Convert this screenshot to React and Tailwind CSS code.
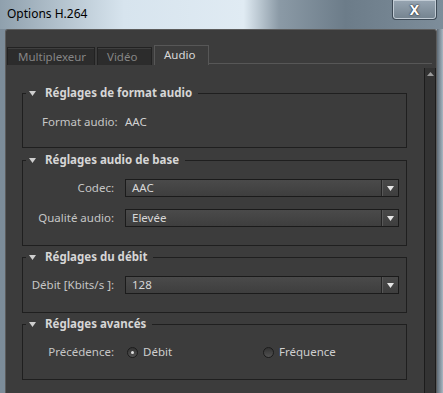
function Caret({ className }) {
  return (
    <svg width="7" height="5" viewBox="0 0 7 5" className={className}>
      <path d="M0 0h7L3.5 5z" fill="currentColor" />
    </svg>
  );
}

function Group({ title, className, children }) {
  return (
    <fieldset className={`border border-[#1f1f1f] ${className}`}>
      <legend className="ml-[3px] px-[3px] leading-[16px]">
        <span className="flex items-center h-[16px] text-[11.5px] font-bold text-[#d6d6d6]">
          <Caret className="text-[#cfcfcf] mr-[9px]" />
          <span className="pr-[3px]">{title}</span>
        </span>
      </legend>
      {children}
    </fieldset>
  );
}

function Select({ value }) {
  return (
    <div className="flex h-[18px] w-[274px] border border-[#1b1b1b] bg-gradient-to-b from-[#4a4a4a] to-[#3e3e3e]">
      <div className="flex-1 pl-[6px] leading-[16px] text-[#d8d8d8]">{value}</div>
      <div className="w-[17px] border-l border-[#252525] shadow-[inset_1px_0_0_#585858] flex items-center justify-center">
        <Caret className="text-[#e6e6e6]" />
      </div>
    </div>
  );
}

function Row({ label, children }) {
  return (
    <div className="flex items-center">
      <div className="w-[92px] text-right pr-[1px] text-[#c6c6c6]">{label}</div>
      <div className="ml-[10px]">{children}</div>
    </div>
  );
}

function Radio({ checked, label }) {
  return (
    <div className="flex items-center gap-[5px]">
      <span className="w-[11px] h-[11px] rounded-full border border-[#1c1c1c] bg-gradient-to-b from-[#333] to-[#525252] flex items-center justify-center">
        {checked && <span className="w-[3px] h-[3px] rounded-full bg-[#e0e0e0]" />}
      </span>
      <span className="text-[#cfcfcf]">{label}</span>
    </div>
  );
}

export default function App() {
  return (
    <div className="w-[443px] h-[393px] overflow-hidden flex flex-col bg-gradient-to-r from-[#7c8c99] via-[#8b9aa6] to-[#a7b5c0] font-['Noto_Sans',sans-serif] text-[11.5px]">
      {/* title bar */}
      <div className="h-[29px] shrink-0 flex items-start bg-[linear-gradient(90deg,#8fa0ad_0%,#b4c3ce_14%,#d7e4ee_28%,#e0ebf3_55%,#8b9aa6_63%,#6c7c89_78%,#7d8d9a_100%)]">
        <span className="pl-[7px] pt-[6px] text-[12px] leading-[16px] text-black">Options H.264</span>
        <div className="ml-auto mr-[6px] w-[45px] h-[20px] rounded-b-[4px] border border-t-0 border-[#3d4a56] shadow-[inset_0_0_0_1px_#c2ccd5] bg-gradient-to-b from-[#97a5b2] to-[#74838f] flex items-center justify-center">
          <span className="text-[14px] font-bold leading-none text-white [text-shadow:0_0_2px_#1d2630,0_0_1px_#1d2630]">X</span>
        </div>
      </div>

      <div className="flex-1 flex min-h-0">
        <div className="w-[5px] shrink-0" />
        {/* client area */}
        <div className="flex-1 flex flex-col min-h-0 bg-[#3c3c3c] border border-b-0 border-[#5c5c5c] rounded-t-[3px]">
          <div className="h-[35px] shrink-0 flex items-end pl-[1px]">
            <div className="h-[18px] w-[88px] bg-[#2c2c2c] border border-b-0 border-[#222] shadow-[inset_0_1px_0_#3f3f3f] text-[#858585] pl-[10px] leading-[17px]">
              Multiplexeur
            </div>
            <div className="ml-[2px] h-[18px] w-[55px] bg-[#2c2c2c] border border-b-0 border-[#222] shadow-[inset_0_1px_0_#3f3f3f] text-[#858585] pl-[9px] leading-[17px]">
              Vidéo
            </div>
            <div className="ml-[2px] h-[20px] w-[55px] bg-[#3c3c3c] border border-b-0 border-[#575757] text-[#d8d8d8] pl-[9px] leading-[18px]">
              Audio
            </div>
            <div className="flex-1 h-[1px] mb-[1px] mr-[4px] bg-[#575757]" />
          </div>

          <div className="flex-1 flex min-h-0">
            <div className="flex-1 pl-[16px] pr-[17px] pt-[20px] flex flex-col">
              <Group title="Réglages de format audio" className="h-[63px]">
                <div className="pt-[13px] flex items-center leading-[16px]">
                  <span className="pl-[19px] w-[102px] text-[#c6c6c6]">Format audio:</span>
                  <span className="text-[#d2d2d2]">AAC</span>
                </div>
              </Group>

              <Group title="Réglages audio de base" className="h-[94px] mt-[4px]">
                <div className="pt-[11px] flex flex-col gap-[12px] leading-[16px]">
                  <Row label="Codec:">
                    <Select value="AAC" />
                  </Row>
                  <Row label="Qualité audio:">
                    <Select value="Elevée" />
                  </Row>
                </div>
              </Group>

              <Group title="Réglages du débit" className="h-[64px] mt-[3px]">
                <div className="pt-[11px] leading-[16px]">
                  <Row label="Débit [Kbits/s ]:">
                    <Select value="128" />
                  </Row>
                </div>
              </Group>

              <Group title="Réglages avancés" className="h-[64px] mt-[3px]">
                <div className="pt-[12px] leading-[16px]">
                  <Row label="Précédence:">
                    <div className="flex items-center">
                      <div className="w-[138px] pl-[2px]">
                        <Radio checked label="Débit" />
                      </div>
                      <Radio label="Fréquence" />
                    </div>
                  </Row>
                </div>
              </Group>
            </div>

            {/* scrollbar */}
            <div className="w-[12px] shrink-0 mt-[3px] bg-[#333] border-x border-[#1c1c1c] flex flex-col items-center pt-[4px]">
              <svg width="7" height="4" viewBox="0 0 7 4">
                <path d="M3.5 0L7 4H0z" fill="#9a9a9a" />
              </svg>
            </div>
          </div>
        </div>
        <div className="w-[6px] shrink-0 bg-gradient-to-r from-[#5e6b76] to-[#a9b7c2]" />
      </div>
    </div>
  );
}
